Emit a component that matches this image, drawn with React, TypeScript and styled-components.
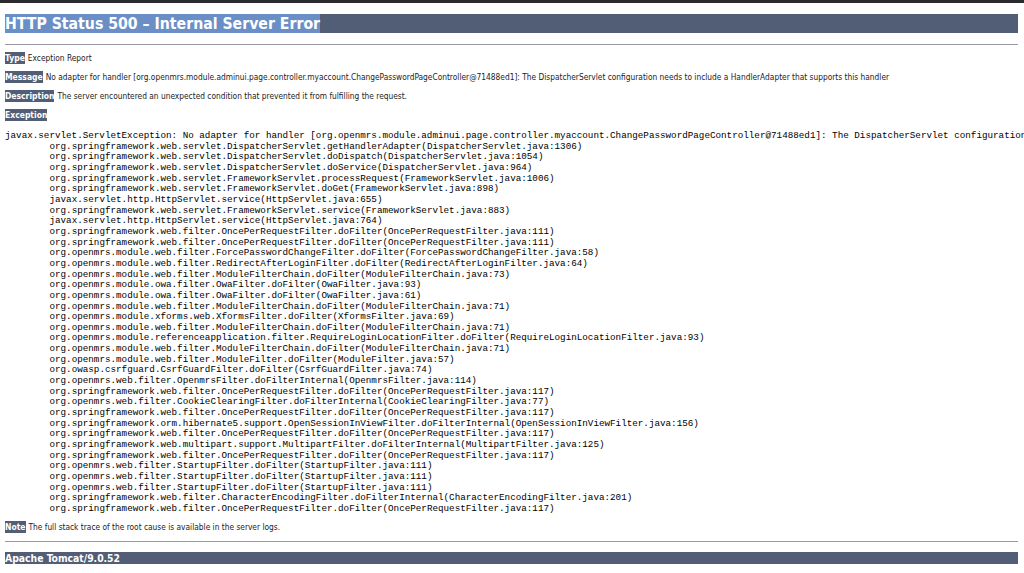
import React from "react";
import styled, { createGlobalStyle } from "styled-components";

const Global = createGlobalStyle`
  html, body { margin: 0; padding: 0; background: #fff; }
  body { height: 573px; overflow: hidden; }
`;

const TopEdge = styled.div`
  height: 3px;
  background: #2b2b2e;
`;

const Page = styled.main`
  width: 1013px;
  margin-left: 5px;
  font-family: "DejaVu Sans Condensed", "DejaVu Sans", sans-serif;
  font-stretch: condensed;
  font-size: 8.3px;
  color: #1c1c1c;
`;

const Title = styled.h1`
  margin: 11px 0 0;
  height: 19px;
  background: #525d76;
  color: #fff;
  font-size: 15.7px;
  font-weight: 700;
  line-height: 20px;
  white-space: nowrap;
`;

const Selected = styled.span`
  display: inline-block;
  height: 19px;
  background: #6a8fc6;
`;

const Rule = styled.hr<{ $top: number; $bottom: number }>`
  margin: ${(p) => p.$top}px 0 ${(p) => p.$bottom}px;
  border: 0;
  height: 1px;
  background: #9a9aa4;
`;

const Line = styled.p`
  margin: 0 0 7px;
  height: 12px;
  line-height: 12px;
  white-space: nowrap;
`;

const Label = styled.b`
  display: inline-block;
  background: #525d76;
  color: #fff;
  font-size: 8.5px;
  font-weight: 700;
  margin-right: 3px;
`;

const Trace = styled.pre`
  margin: 10px 0 6px;
  width: 1019px;
  font-family: "Liberation Mono", monospace;
  font-size: 9.26px;
  line-height: 10.66px;
  color: #000;
  white-space: pre;
  overflow: hidden;
`;

const Footer = styled.h3`
  margin: 0;
  height: 12px;
  background: #525d76;
  color: #fff;
  font-size: 10.3px;
  font-weight: 700;
  line-height: 12px;
`;

const trace = `javax.servlet.ServletException: No adapter for handler [org.openmrs.module.adminui.page.controller.myaccount.ChangePasswordPageController@71488ed1]: The DispatcherServlet configuration needs to include a HandlerAdapter that supports this handler
	org.springframework.web.servlet.DispatcherServlet.getHandlerAdapter(DispatcherServlet.java:1306)
	org.springframework.web.servlet.DispatcherServlet.doDispatch(DispatcherServlet.java:1054)
	org.springframework.web.servlet.DispatcherServlet.doService(DispatcherServlet.java:964)
	org.springframework.web.servlet.FrameworkServlet.processRequest(FrameworkServlet.java:1006)
	org.springframework.web.servlet.FrameworkServlet.doGet(FrameworkServlet.java:898)
	javax.servlet.http.HttpServlet.service(HttpServlet.java:655)
	org.springframework.web.servlet.FrameworkServlet.service(FrameworkServlet.java:883)
	javax.servlet.http.HttpServlet.service(HttpServlet.java:764)
	org.springframework.web.filter.OncePerRequestFilter.doFilter(OncePerRequestFilter.java:111)
	org.springframework.web.filter.OncePerRequestFilter.doFilter(OncePerRequestFilter.java:111)
	org.openmrs.module.web.filter.ForcePasswordChangeFilter.doFilter(ForcePasswordChangeFilter.java:58)
	org.openmrs.module.web.filter.RedirectAfterLoginFilter.doFilter(RedirectAfterLoginFilter.java:64)
	org.openmrs.module.web.filter.ModuleFilterChain.doFilter(ModuleFilterChain.java:73)
	org.openmrs.module.owa.filter.OwaFilter.doFilter(OwaFilter.java:93)
	org.openmrs.module.owa.filter.OwaFilter.doFilter(OwaFilter.java:61)
	org.openmrs.module.web.filter.ModuleFilterChain.doFilter(ModuleFilterChain.java:71)
	org.openmrs.module.xforms.web.XformsFilter.doFilter(XformsFilter.java:69)
	org.openmrs.module.web.filter.ModuleFilterChain.doFilter(ModuleFilterChain.java:71)
	org.openmrs.module.referenceapplication.filter.RequireLoginLocationFilter.doFilter(RequireLoginLocationFilter.java:93)
	org.openmrs.module.web.filter.ModuleFilterChain.doFilter(ModuleFilterChain.java:71)
	org.openmrs.module.web.filter.ModuleFilter.doFilter(ModuleFilter.java:57)
	org.owasp.csrfguard.CsrfGuardFilter.doFilter(CsrfGuardFilter.java:74)
	org.openmrs.web.filter.OpenmrsFilter.doFilterInternal(OpenmrsFilter.java:114)
	org.springframework.web.filter.OncePerRequestFilter.doFilter(OncePerRequestFilter.java:117)
	org.openmrs.web.filter.CookieClearingFilter.doFilterInternal(CookieClearingFilter.java:77)
	org.springframework.web.filter.OncePerRequestFilter.doFilter(OncePerRequestFilter.java:117)
	org.springframework.orm.hibernate5.support.OpenSessionInViewFilter.doFilterInternal(OpenSessionInViewFilter.java:156)
	org.springframework.web.filter.OncePerRequestFilter.doFilter(OncePerRequestFilter.java:117)
	org.springframework.web.multipart.support.MultipartFilter.doFilterInternal(MultipartFilter.java:125)
	org.springframework.web.filter.OncePerRequestFilter.doFilter(OncePerRequestFilter.java:117)
	org.openmrs.web.filter.StartupFilter.doFilter(StartupFilter.java:111)
	org.openmrs.web.filter.StartupFilter.doFilter(StartupFilter.java:111)
	org.openmrs.web.filter.StartupFilter.doFilter(StartupFilter.java:111)
	org.springframework.web.filter.CharacterEncodingFilter.doFilterInternal(CharacterEncodingFilter.java:201)
	org.springframework.web.filter.OncePerRequestFilter.doFilter(OncePerRequestFilter.java:117)`;

export default function App() {
  return (
    <>
      <Global />
      <TopEdge />
      <Page>
        <Title>
          <Selected>HTTP Status 500 – Internal Server Error</Selected>
        </Title>
        <Rule $top={11} $bottom={7} />
        <Line><Label>Type</Label>Exception Report</Line>
        <Line>
          <Label>Message</Label>No adapter for handler [org.openmrs.module.adminui.page.controller.myaccount.ChangePasswordPageController@71488ed1]: The DispatcherServlet configuration needs to include a HandlerAdapter that supports this handler
        </Line>
        <Line><Label>Description</Label>The server encountered an unexpected condition that prevented it from fulfilling the request.</Line>
        <Line><Label>Exception</Label></Line>
        <Trace>{trace}</Trace>
        <Line><Label>Note</Label>The full stack trace of the root cause is available in the server logs.</Line>
        <Rule $top={8} $bottom={10} />
        <Footer>Apache Tomcat/9.0.52</Footer>
      </Page>
    </>
  );
}
